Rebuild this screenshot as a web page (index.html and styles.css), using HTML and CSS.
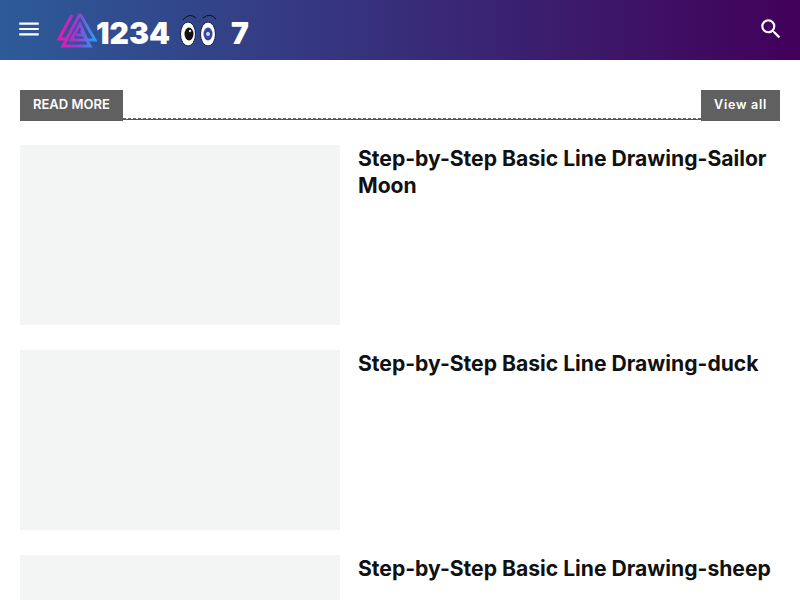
FILE: index.html
```html
<!DOCTYPE html>
<html lang="en">

<head>
    <meta charset="UTF-8">
    <meta name="viewport" content="width=device-width, initial-scale=1.0">
    <title>1234 00 7</title>
    <link rel="stylesheet" href="styles.css">
</head>

<body>

    <header class="topbar">
        <div class="topbar-left">
            <svg class="menu-icon" width="26" height="26" viewBox="0 0 24 24" fill="#fff">
                <path d="M3 18h18v-2H3v2zm0-5h18v-2H3v2zm0-7v2h18V6H3z" />
            </svg>
            <a class="logo" href="#">
                <svg class="logo-mark" width="40" height="37" viewBox="0 0 40 37" fill="none" stroke-width="3">
                    <defs>
                        <linearGradient id="tri" gradientUnits="userSpaceOnUse" x1="2" y1="24" x2="38" y2="24">
                            <stop offset="0" stop-color="#f014b0" />
                            <stop offset="0.5" stop-color="#9a3ad0" />
                            <stop offset="1" stop-color="#2a9cf0" />
                        </linearGradient>
                    </defs>
                    <path d="M15 3 L2 27 H11" stroke="url(#tri)" />
                    <path d="M23 2 L38 28 H31" stroke="url(#tri)" />
                    <path d="M23 2 L6 34 H33 L24 18" stroke="url(#tri)" />
                    <path d="M23 12 L14 28 H30 Z" stroke="url(#tri)" />
                    <path d="M19 23 H27" stroke="url(#tri)" />
                </svg>
                <span class="logo-num logo-first">1234</span>
                <svg class="logo-eyes" width="38" height="36" viewBox="0 0 38 36">
                    <path d="M3 8 Q9 0 16 6" fill="none" stroke="#111" stroke-width="1" />
                    <path d="M23 6 Q30 0 36 7" fill="none" stroke="#111" stroke-width="1" />
                    <ellipse cx="8" cy="22" rx="7.5" ry="12" fill="#fff" stroke="#14204a" stroke-width="1" />
                    <ellipse cx="28" cy="22" rx="7.5" ry="12" fill="#fff" stroke="#14204a" stroke-width="1" />
                    <ellipse cx="9" cy="22" rx="4.5" ry="6.5" fill="#111" />
                    <ellipse cx="28" cy="22" rx="4.5" ry="6.5" fill="#35489c" />
                    <circle cx="10" cy="19" r="1.2" fill="#ddd" />
                    <circle cx="28" cy="22" r="2" fill="#cdd4ee" />
                </svg>
                <span class="logo-num logo-seven">7</span>
            </a>
        </div>
        <svg class="search-icon" width="26" height="26" viewBox="0 0 24 24" fill="#fff">
            <path d="M15.5 14h-.79l-.28-.27A6.47 6.47 0 0 0 16 9.5 6.5 6.5 0 1 0 9.5 16c1.61 0 3.09-.59 4.23-1.57l.27.28v.79l5 4.99L20.49 19l-4.99-5zm-6 0C7.01 14 5 11.99 5 9.5S7.01 5 9.5 5 14 7.01 14 9.5 11.99 14 9.5 14z" />
        </svg>
    </header>

    <main class="content">
        <div class="section-head">
            <span class="section-label">READ MORE</span>
            <span class="section-line"></span>
            <a class="section-label view-all" href="#">View all</a>
        </div>

        <article class="post">
            <div class="post-thumb"></div>
            <h2 class="post-title">Step-by-Step Basic Line Drawing-Sailor Moon</h2>
        </article>

        <article class="post">
            <div class="post-thumb"></div>
            <h2 class="post-title">Step-by-Step Basic Line Drawing-duck</h2>
        </article>

        <article class="post">
            <div class="post-thumb"></div>
            <h2 class="post-title">Step-by-Step Basic Line Drawing-sheep</h2>
        </article>
    </main>

</body>

</html>
```

FILE: styles.css
```css
* {
    margin: 0;
    box-sizing: border-box;
}

html,
body {
    height: 100%;
    overflow: hidden;
}

body {
    font-family: Inter, "Liberation Sans", sans-serif;
    background-color: #fff;
    color: #111;
}

.topbar {
    height: 60px;
    display: flex;
    align-items: center;
    justify-content: space-between;
    padding: 0 16px 2px;
    background: linear-gradient(90deg, #2d5b99, #42005a);
}

.topbar-left {
    display: flex;
    align-items: center;
    gap: 15px;
}

.logo {
    display: flex;
    align-items: center;
    margin-top: 2px;
    color: #fff;
    text-decoration: none;
}

.logo-num {
    font-size: 30px;
    font-weight: 900;
    line-height: 34px;
    margin-top: 6px;
}

.logo-first {
    margin-left: -1px;
}

.logo-eyes {
    margin-left: 10px;
}

.logo-seven {
    margin-left: 13px;
}

.content {
    padding: 30px 20px 0;
}

.section-head {
    display: flex;
    height: 31px;
    margin-bottom: 24px;
}

.section-label {
    display: flex;
    align-items: center;
    padding: 0 13px 3px;
    font-size: 13px;
    font-weight: 600;
    color: #fff;
    background-color: #606060;
    text-decoration: none;
}

.view-all {
    font-size: 12.5px;
    letter-spacing: 0.75px;
}

.section-line {
    flex: 1;
    height: 2px;
    align-self: flex-end;
    margin-bottom: 1px;
    border-top: 1px dashed #666;
    border-bottom: 1px solid #555;
}

.post {
    display: flex;
    gap: 18px;
    margin-bottom: 25px;
}

.post-thumb {
    flex: none;
    width: 320px;
    height: 180px;
    background-color: #f3f4f4;
}

.post-title {
    font-size: 21.12px;
    font-weight: 700;
    line-height: 27px;
}
```
